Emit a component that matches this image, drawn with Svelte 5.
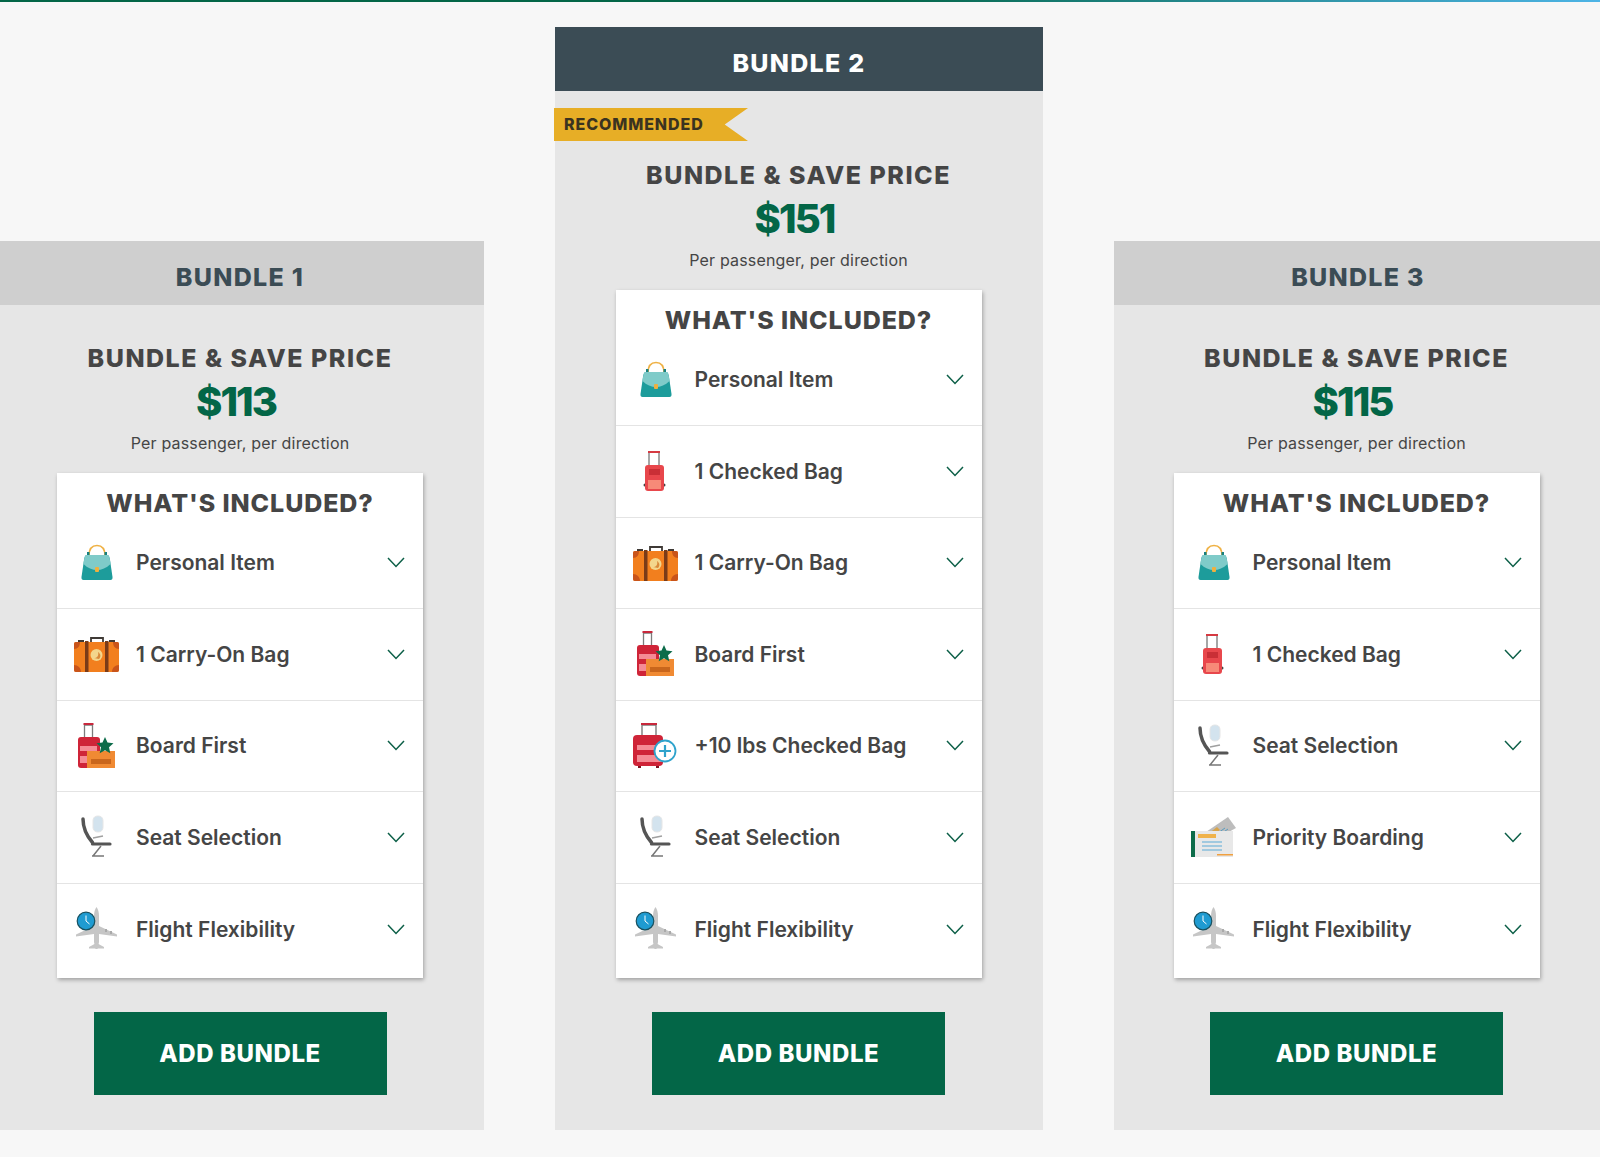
<script lang="ts">
  const bundles = [
    {
      name: "BUNDLE 1",
      price: 113,
      items: [
        ["bag", "Personal Item"],
        ["carry", "1 Carry-On Bag"],
        ["board", "Board First"],
        ["seat", "Seat Selection"],
        ["flex", "Flight Flexibility"],
      ],
    },
    {
      name: "BUNDLE 2",
      price: 151,
      featured: true,
      items: [
        ["bag", "Personal Item"],
        ["checked", "1 Checked Bag"],
        ["carry", "1 Carry-On Bag"],
        ["board", "Board First"],
        ["plus", "+10 lbs Checked Bag"],
        ["seat", "Seat Selection"],
        ["flex", "Flight Flexibility"],
      ],
    },
    {
      name: "BUNDLE 3",
      price: 115,
      items: [
        ["bag", "Personal Item"],
        ["checked", "1 Checked Bag"],
        ["seat", "Seat Selection"],
        ["priority", "Priority Boarding"],
        ["flex", "Flight Flexibility"],
      ],
    },
  ];
</script>

{#snippet icon(kind)}
  <svg class="icon" viewBox="0 0 46 46" width="46" height="46" aria-hidden="true">
    {#if kind === "bag"}
      <path d="M15 16c0-7 3-10.500 8-10.500s8 3.500 8 10.500" fill="none" stroke="#efb144" stroke-width="1.600" />
      <rect x="13" y="12" width="2.500" height="4" fill="#16807f" />
      <rect x="30.500" y="12" width="2.500" height="4" fill="#16807f" />
      <path d="M13 15h20c2 0 2.500 2 3 5l2.500 17c.2 2-.5 3-2 3h-27c-1.500 0-2.200-1-2-3L10 20c.5-3 1-5 3-5z" fill="#1d9c9b" />
      <path d="M12 15h22c1 0 2 4 2.500 9-4 4-9 6-13.500 6s-9.500-2-13.500-6c.5-5 1.500-9 2.500-9z" fill="#7fcbc9" />
      <rect x="21" y="27" width="4" height="5" rx="1" fill="#eeb03f" />
    {:else if kind === "carry"}
      <path d="M17 11V7h12v4" fill="none" stroke="#3f3a36" stroke-width="1.800" />
      <rect x="4" y="9" width="6" height="3" fill="#3f3a36" />
      <rect x="35" y="9" width="6" height="3" fill="#3f3a36" />
      <rect x="0" y="11" width="45" height="30" rx="2" fill="#f27f1e" />
      <path d="M0 34c4 0 7 3 7 7H2a2 2 0 0 1-2-2zM45 34c-4 0-7 3-7 7h5a2 2 0 0 0 2-2zM0 18c4 0 6-3 6-7H2a2 2 0 0 0-2 2zM45 18c-4 0-6-3-6-7h4a2 2 0 0 1 2 2z" fill="#c9541a" />
      <rect x="11" y="10" width="3.500" height="31" fill="#7a3b18" />
      <rect x="31" y="10" width="3.500" height="31" fill="#7a3b18" />
      <circle cx="22.500" cy="24" r="6" fill="#f3d68c" />
      <path d="M20 27c3 0 5-2 4-6 3 2 3 5 1 7z" fill="#d98a3a" />
    {:else if kind === "board"}
      <path d="M10.500 14V2h8v12" fill="none" stroke="#7c7c7c" stroke-width="1.300" />
      <rect x="9.500" y="0" width="10" height="2" fill="#c8283c" />
      <rect x="4" y="14" width="22" height="31" rx="3" fill="#cf2438" />
      <rect x="6" y="23" width="17" height="5" fill="#f58b95" />
      <rect x="6" y="33" width="8" height="7" fill="#f58b95" />
      <rect x="13" y="28" width="28" height="17" fill="#f08a33" />
      <rect x="17" y="36" width="20" height="5" fill="#c9661c" />
      <path d="M31 14l2.500 5.500 6 .700-4.500 4 1.300 6-5.300-3-5.300 3 1.300-6-4.500-4 6-.700z" fill="#0d6c4a" />
    {:else if kind === "seat"}
      <rect x="19" y="2" width="10" height="16" rx="4.500" fill="#d3e3ee" stroke="#e6e6e6" />
      <path d="M9 5c0 9 3 16 9.500 23.500" fill="none" stroke="#555" stroke-width="3.500" stroke-linecap="round" />
      <path d="M18.500 30H36" stroke="#555" stroke-width="3.200" stroke-linecap="round" />
      <path d="M19 24l10-2" stroke="#a0a0a0" stroke-width="1.600" />
      <path d="M27 32l-8 10M18 42h12" fill="none" stroke="#777" stroke-width="1.500" />
    {:else if kind === "flex"}
      <path d="M22.500 1c1.500 2 2.500 5 2.500 9v26l-1.500 7h-2L20 36V10c0-4 1-7 2.500-9z" fill="#c6c6c6" />
      <path d="M20 20L2 28.500v2L20 28zM25 20l18 8.500v2L25 28z" fill="#c6c6c6" />
      <path d="M31 23h2v3h-2zM36 25h2v3h-2z" fill="#aaa" />
      <path d="M15 41l5.500-3h4l5.500 3v1.500H15z" fill="#c6c6c6" />
      <circle cx="12" cy="15" r="8.800" fill="#1f9bd1" stroke="#17505f" stroke-width="1.200" />
      <path d="M12 9.500V15l3.500 3" fill="none" stroke="#fff" stroke-width="1" />
    {:else if kind === "checked"}
      <path d="M16 18V4h10v14" fill="none" stroke="#777" stroke-width="1.300" />
      <rect x="15" y="3" width="12" height="2" fill="#d63a42" />
      <circle cx="12" cy="37" r="1.500" fill="#444" />
      <circle cx="31" cy="37" r="1.500" fill="#444" />
      <rect x="12" y="17" width="19" height="26" rx="3" fill="#e8474c" />
      <rect x="16" y="21" width="11" height="6" fill="#c92f36" />
      <rect x="15" y="32" width="13" height="9" fill="#f78a78" />
    {:else if kind === "plus"}
      <path d="M9 13V2h14v11" fill="none" stroke="#7c7c7c" stroke-width="1.400" />
      <rect x="8" y="0" width="16" height="2" fill="#c8283c" />
      <rect x="0" y="12" width="30" height="31" rx="4" fill="#cf2438" />
      <rect x="4" y="22" width="26" height="5" fill="#f58b95" />
      <rect x="4" y="32" width="26" height="7" fill="#f58b95" />
      <rect x="5" y="43" width="3" height="2" fill="#7c1422" />
      <rect x="23" y="43" width="3" height="2" fill="#7c1422" />
      <circle cx="32" cy="28" r="10.500" fill="#fff" stroke="#2fa3cc" stroke-width="1.800" />
      <path d="M32 22v12M26 28h12" stroke="#2fa3cc" stroke-width="2.200" />
    {:else if kind === "priority"}
      <path d="M12 20L37 3l8 11-18 10z" fill="#bdbdbd" />
      <path d="M17 20l9-7 3 3-7 5z" fill="#d8a44a" />
      <path d="M24 21l10-7M27 22l10-7" stroke="#5a9cc0" stroke-width="1" />
      <rect x="0" y="17" width="42" height="26" fill="#e8e8e8" />
      <rect x="0" y="17" width="4" height="26" fill="#0d6c4a" />
      <rect x="7" y="20" width="18" height="4" fill="#f0b24a" />
      <path d="M11 28h20M11 32h20M11 36h20" stroke="#5aa9d6" stroke-width="1.200" />
      <rect x="26" y="40" width="16" height="1.500" fill="#f0a040" />
    {/if}
  </svg>
{/snippet}

<div class="page">
  <div class="strip"></div>
  <div class="bundles">
    {#each bundles as bundle}
      <section class="card">
        <h2 class="head" class:featured={bundle.featured}>{bundle.name}</h2>
        <div class="body">
          {#if bundle.featured}
            <div class="ribbon">RECOMMENDED</div>
          {/if}
          <h3 class="save" class:after-ribbon={bundle.featured}>BUNDLE &amp; SAVE PRICE</h3>
          <div class="price">${bundle.price}</div>
          <p class="per">Per passenger, per direction</p>
          <div class="box">
            <h4>WHAT'S INCLUDED?</h4>
            <ul>
              {#each bundle.items as [kind, label]}
                <li>
                  {@render icon(kind)}
                  <span>{label}</span>
                  <svg class="chev" viewBox="0 0 18 11" width="18" height="11" aria-hidden="true">
                    <path d="M1 1l8 8.500L17 1" fill="none" stroke="#0c5f47" stroke-width="1.500" />
                  </svg>
                </li>
              {/each}
            </ul>
          </div>
          <button>ADD BUNDLE</button>
        </div>
      </section>
    {/each}
  </div>
</div>

<style>
  :global(body) {
    background: #f7f7f7;
    overflow: hidden;
  }

  .page {
    height: 1157px;
    font-family: Inter, "Liberation Sans", sans-serif;
    color: #454545;
  }

  .strip {
    height: 2px;
    background: linear-gradient(90deg, #036647 0%, #036647 55%, #4db4e6 100%);
  }

  .bundles {
    display: flex;
    align-items: flex-end;
    gap: 71px;
    margin-left: -4px;
    width: 1610px;
    padding-top: 25px;
  }

  .card {
    width: 488px;
    flex: none;
  }

  h2, h3, h4, p, ul {
    margin: 0;
    padding: 0;
  }

  .head {
    height: 64px;
    line-height: 72px;
    text-align: center;
    background: #cfcfcf;
    color: #3b4c55;
    font-size: 25px;
    font-weight: 800;
    letter-spacing: 1.300px;
  }

  .head.featured {
    background: #3b4c55;
    color: #fff;
  }

  .body {
    display: flex;
    flex-direction: column;
    align-items: center;
    background: #e6e6e6;
    padding: 37px 0 35px;
  }

  .card:nth-child(2) .body {
    padding-right: 1px;
  }

  .card:nth-child(3) .body {
    padding-right: 3px;
  }

  .body:has(.ribbon) {
    padding-top: 17px;
  }

  .ribbon {
    align-self: flex-start;
    box-sizing: border-box;
    width: 194px;
    height: 33px;
    margin-left: -1px;
    padding-left: 10px;
    line-height: 33px;
    font-size: 16px;
    font-weight: 800;
    letter-spacing: 0.900px;
    color: #3a3320;
    background: #e7ae26;
    clip-path: polygon(0 0, 100% 0, 88% 50%, 100% 100%, 0 100%);
  }

  .save {
    line-height: 32px;
    font-size: 25px;
    font-weight: 800;
    letter-spacing: 1.500px;
  }

  .save.after-ribbon {
    margin-top: 18px;
  }

  .price {
    margin: 5px 8px 0 0;
    line-height: 46px;
    font-size: 40px;
    font-weight: 800;
    letter-spacing: -2px;
    color: #036647;
  }

  .per {
    margin-top: 8px;
    line-height: 20px;
    font-size: 16px;
    letter-spacing: 0.180px;
  }

  .box {
    box-sizing: border-box;
    width: 366px;
    margin-top: 20px;
    padding-bottom: 3px;
    background: #fff;
    box-shadow: 1px 2px 4px rgba(0, 0, 0, 0.3);
  }

  h4 {
    padding-top: 17px;
    line-height: 27.500px;
    text-align: center;
    font-size: 25px;
    font-weight: 800;
    letter-spacing: 0.900px;
  }

  ul {
    list-style: none;
  }

  li {
    box-sizing: border-box;
    display: flex;
    align-items: center;
    height: 91.500px;
    padding: 0 18px 0 17px;
    border-bottom: 1px solid #e4e4e4;
    font-size: 21px;
    font-weight: 600;
  }

  li:last-child {
    border-bottom: none;
  }

  .icon {
    flex: none;
    margin-right: 16px;
  }

  .chev {
    flex: none;
    margin-left: auto;
  }

  button {
    width: 293px;
    height: 83px;
    margin-top: 34px;
    border: none;
    background: #036647;
    color: #fff;
    font-family: inherit;
    font-size: 24px;
    font-weight: 800;
    letter-spacing: 0.600px;
  }
</style>
